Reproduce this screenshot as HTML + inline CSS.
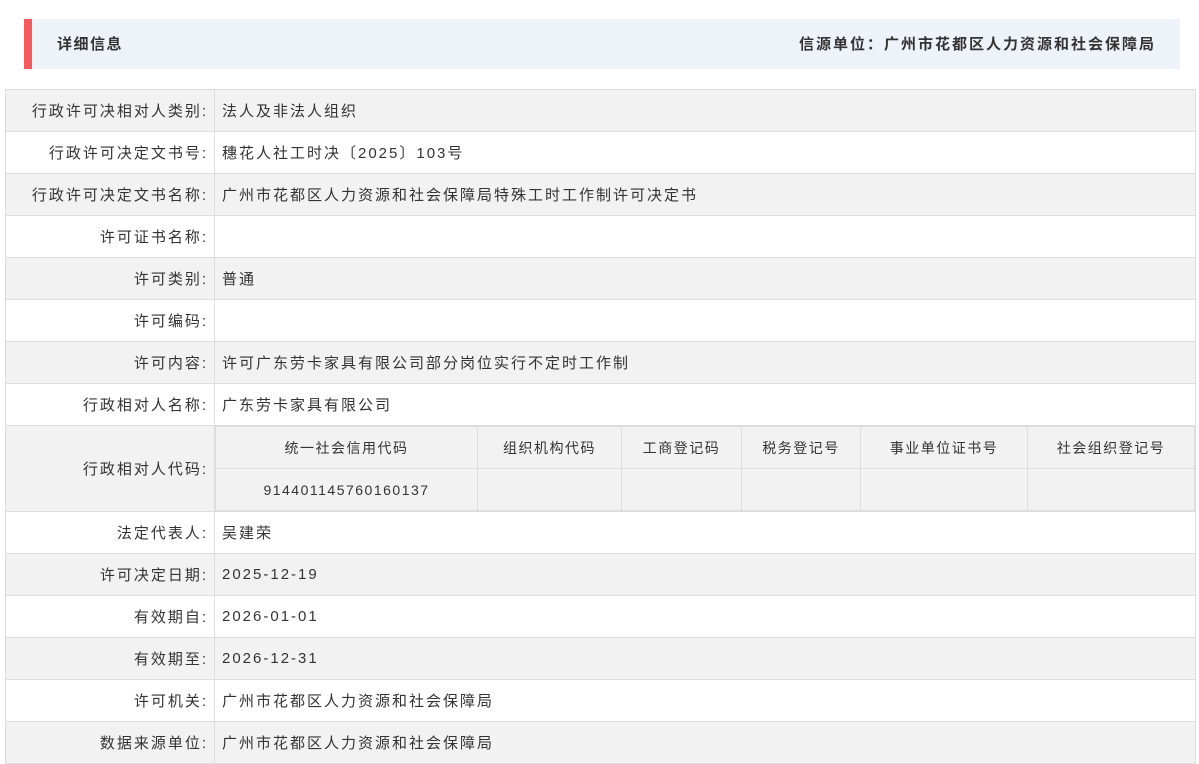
<!DOCTYPE html>
<html><head><meta charset="utf-8"><style>
*{margin:0;padding:0;box-sizing:border-box}
body{width:1199px;height:763px;overflow:hidden;background:#fff;font-family:"Liberation Sans","Noto Sans CJK SC",sans-serif;font-size:15px;letter-spacing:2px;color:#333}
.hd{position:absolute;left:24px;top:19px;width:1156px;height:50px;background:#eef2f9;border-left:8px solid #f45c5c}
.hd .l{position:absolute;left:25px;top:14px;font-size:15px;font-weight:bold;color:#333;letter-spacing:1.5px}
.hd .r{position:absolute;right:24px;top:14px;font-size:15px;font-weight:bold;color:#333;letter-spacing:2px}
table.m{position:absolute;left:5px;top:89px;width:1191px;border-collapse:collapse}
table.m td{border:1px solid #ddd;height:42px;padding:0 7px;vertical-align:middle;white-space:nowrap}
table.m td.k{width:209px;text-align:right;padding-right:6px}
table.m tr:nth-child(odd){background:#f2f2f2}
table.m tr:nth-child(even){background:#fff}
table.s{border-collapse:collapse;width:980px;margin-left:-7px}
table.s td{border:1px solid #ddd;height:42px;text-align:center;font-size:14px;letter-spacing:1.5px;background:#f2f2f2;padding:0}
</style></head><body>
<div class="hd"><span class="l">详细信息</span><span class="r">信源单位：广州市花都区人力资源和社会保障局</span></div>
<table class="m">
<tr><td class="k">行政许可决相对人类别:</td><td>法人及非法人组织</td></tr>
<tr><td class="k">行政许可决定文书号:</td><td>穗花人社工时决〔2025〕103号</td></tr>
<tr><td class="k">行政许可决定文书名称:</td><td>广州市花都区人力资源和社会保障局特殊工时工作制许可决定书</td></tr>
<tr><td class="k">许可证书名称:</td><td></td></tr>
<tr><td class="k">许可类别:</td><td>普通</td></tr>
<tr><td class="k">许可编码:</td><td></td></tr>
<tr><td class="k">许可内容:</td><td>许可广东劳卡家具有限公司部分岗位实行不定时工作制</td></tr>
<tr><td class="k">行政相对人名称:</td><td>广东劳卡家具有限公司</td></tr>
<tr><td class="k" style="height:86px">行政相对人代码:</td><td style="padding:0 0 0 7px">
<table class="s"><tr><td style="width:262px">统一社会信用代码</td><td style="width:144px">组织机构代码</td><td style="width:120px">工商登记码</td><td style="width:119px">税务登记号</td><td style="width:167px">事业单位证书号</td><td>社会组织登记号</td></tr>
<tr><td>914401145760160137</td><td></td><td></td><td></td><td></td><td></td></tr></table></td></tr>
<tr><td class="k">法定代表人:</td><td>吴建荣</td></tr>
<tr><td class="k">许可决定日期:</td><td>2025-12-19</td></tr>
<tr><td class="k">有效期自:</td><td>2026-01-01</td></tr>
<tr><td class="k">有效期至:</td><td>2026-12-31</td></tr>
<tr><td class="k">许可机关:</td><td>广州市花都区人力资源和社会保障局</td></tr>
<tr><td class="k">数据来源单位:</td><td>广州市花都区人力资源和社会保障局</td></tr>
</table>
</body></html>
